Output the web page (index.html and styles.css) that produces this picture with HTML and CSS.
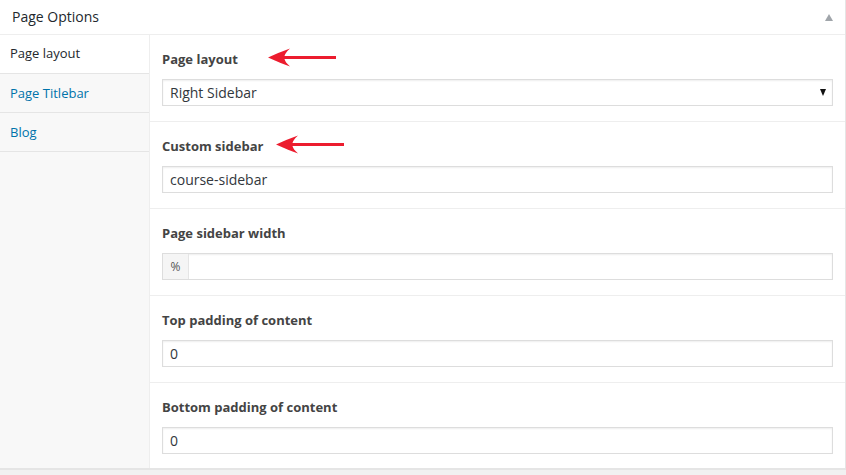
FILE: index.html
```html
<!DOCTYPE html>
<html>
<head>
<meta charset="utf-8">
<link rel="stylesheet" href="styles.css">
</head>
<body>
<div class="box">
  <div class="box-head">
    <h2 class="box-title">Page Options</h2>
    <span class="toggle"></span>
  </div>
  <div class="box-body">
    <ul class="tabs">
      <li class="tab active">Page layout</li>
      <li class="tab"><a href="#">Page Titlebar</a></li>
      <li class="tab"><a href="#">Blog</a></li>
    </ul>
    <div class="panel">
      <div class="field">
        <div class="label-row">
          <label class="label">Page layout</label>
          <svg class="arrow arrow-one" width="72" height="20" viewBox="0 0 72 20"><path d="M2 9.5 Q14 4 24 0.5 Q19 5 18.5 8 L70 8 L70 11 L18.5 11 Q19 14 24 18.5 Q14 15 2 9.5 Z" fill="#ec1c2e"/></svg>
        </div>
        <div class="select">Right Sidebar<span class="caret"></span></div>
      </div>
      <div class="field">
        <div class="label-row">
          <label class="label">Custom sidebar</label>
          <svg class="arrow arrow-two" width="72" height="20" viewBox="0 0 72 20"><path d="M2 9.5 Q14 4 24 0.5 Q19 5 18.5 8 L70 8 L70 11 L18.5 11 Q19 14 24 18.5 Q14 15 2 9.5 Z" fill="#ec1c2e"/></svg>
        </div>
        <div class="input">course-sidebar</div>
      </div>
      <div class="field">
        <div class="label-row"><label class="label">Page sidebar width</label></div>
        <div class="input group"><span class="addon">%</span><span class="grow"></span></div>
      </div>
      <div class="field">
        <div class="label-row"><label class="label">Top padding of content</label></div>
        <div class="input">0</div>
      </div>
      <div class="field last">
        <div class="label-row"><label class="label">Bottom padding of content</label></div>
        <div class="input">0</div>
      </div>
    </div>
  </div>
</div>
</body>
</html>
```

FILE: styles.css
```css
html, body {
  margin: 0;
  padding: 0;
  background: #f1f1f1;
  font-family: "Open Sans", "Liberation Sans", sans-serif;
}
.box {
  width: 846px;
  background: #fff;
  border-right: 1px solid #e5e5e5;
  border-bottom: 2px solid #e5e5e5;
  box-sizing: border-box;
  display: flex;
  flex-direction: column;
}
.box-head {
  flex-shrink: 0;
  height: 35px;
  box-sizing: border-box;
  border-bottom: 1px solid #eee;
  display: flex;
  align-items: center;
  justify-content: space-between;
  padding: 0 12px 0 12px;
}
.box-title {
  margin: 0;
  font-size: 14px;
  font-weight: 400;
  color: #23282d;
  line-height: 1;
}
.toggle {
  width: 0;
  height: 0;
  border-left: 4px solid transparent;
  border-right: 4px solid transparent;
  border-bottom: 7px solid #a0a5aa;
}
.box-body {
  display: flex;
}
.tabs {
  list-style: none;
  margin: 0;
  padding: 0;
  width: 149px;
  flex-shrink: 0;
  background: #f8f8f8;
  border-right: 1px solid #eee;
}
.tab {
  height: 39px;
  box-sizing: border-box;
  border-bottom: 1px solid #e5e5e5;
  font-size: 13px;
  line-height: 38px;
  padding-left: 10px;
  color: #23282d;
}
.tab a {
  color: #0073aa;
  text-decoration: none;
}
.tab.active {
  background: #fff;
  line-height: 37px;
}
.panel {
  flex: 1;
  display: flex;
  flex-direction: column;
}
.field {
  height: 87px;
  flex-shrink: 0;
  box-sizing: border-box;
  border-bottom: 1px solid #eee;
  padding: 16px 12px 0 12px;
}
.field.last {
  height: 85px;
  border-bottom: none;
}
.label-row {
  display: flex;
  align-items: center;
  height: 16px;
  margin-bottom: 12px;
}
.label {
  font-size: 13px;
  font-weight: 700;
  color: #444;
}
.arrow {
  display: block;
  flex-shrink: 0;
}
.arrow-one {
  margin-left: 28px;
  margin-top: -2px;
}
.arrow-two {
  margin-left: 11px;
  margin-top: -2px;
}
.select, .input {
  height: 27px;
  box-sizing: border-box;
  border: 1px solid #ddd;
  box-shadow: inset 0 1px 2px rgba(0,0,0,0.07);
  font-size: 14px;
  color: #32373c;
  line-height: 25px;
  padding-left: 7px;
  position: relative;
  background: #fff;
}
.caret {
  position: absolute;
  right: 6px;
  top: 9px;
  width: 0;
  height: 0;
  border-left: 3.5px solid transparent;
  border-right: 3.5px solid transparent;
  border-top: 7px solid #111;
}
.input.group {
  display: flex;
  padding-left: 0;
}
.addon {
  width: 25px;
  background: #f5f5f5;
  border-right: 1px solid #e5e5e5;
  font-size: 12px;
  color: #555;
  text-align: center;
}
.grow { flex: 1; }
```
